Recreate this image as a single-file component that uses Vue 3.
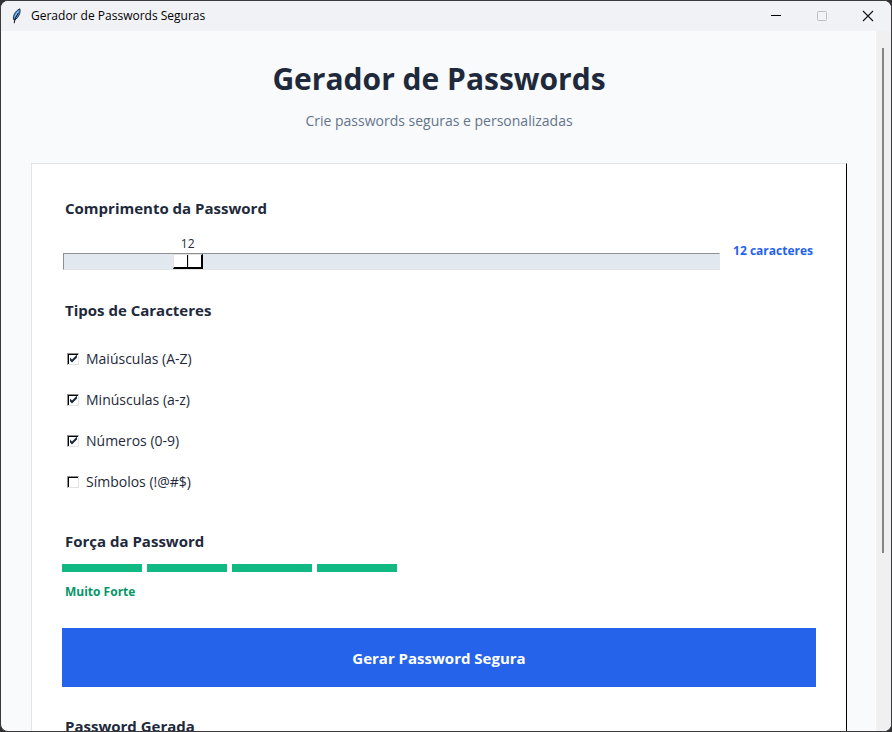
<script setup>
import { computed, ref } from 'vue'

const MIN = 4
const MAX = 50
const length = ref(12)
const ratio = computed(() => (length.value - MIN) / (MAX - MIN))

const types = ref([
  { id: 'upper', label: 'Maiúsculas (A-Z)', on: true },
  { id: 'lower', label: 'Minúsculas (a-z)', on: true },
  { id: 'digits', label: 'Números (0-9)', on: true },
  { id: 'symbols', label: 'Símbolos (!@#$)', on: false },
])
</script>

<template>
  <div class="window">
    <header class="titlebar">
      <svg class="feather" width="12" height="16" viewBox="0 0 12 16" aria-hidden="true">
        <path d="M2.500 11.500C1.800 8 4 3 8.800 .8C10 4.500 7.600 9.500 4 12Z" fill="#4d94e6" stroke="#1a2430" stroke-width=".9" />
        <path d="M7 3.500L4.200 8.500" stroke="#9cc8f7" stroke-width="1" />
        <path d="M7.400 5C5.500 8 3.600 10.500 3.200 15.200" fill="none" stroke="#0b0f14" stroke-width="1" />
      </svg>
      <span class="caption">Gerador de Passwords Seguras</span>
      <div class="controls">
        <button type="button" aria-label="Minimizar">
          <svg width="10" height="10" viewBox="0 0 10 10"><path d="M0 4.500H10" stroke="#000" /></svg>
        </button>
        <button type="button" aria-label="Maximizar" disabled>
          <svg width="10" height="10" viewBox="0 0 10 10"><rect x=".5" y=".5" width="9" height="9" rx="1" fill="none" stroke="#bfbfc3" /></svg>
        </button>
        <button type="button" aria-label="Fechar">
          <svg width="10" height="10" viewBox="0 0 10 10"><path d="M0 0L10 10M10 0L0 10" stroke="#111" stroke-width="1.100" /></svg>
        </button>
      </div>
    </header>

    <div class="body">
      <main class="content">
        <h1>Gerador de Passwords</h1>
        <p class="subtitle">Crie passwords seguras e personalizadas</p>

        <section class="card">
          <h2><label for="length">Comprimento da Password</label></h2>
          <div class="length-row">
            <div class="scale">
              <div class="value-rail">
                <span class="value" :style="{ left: ratio * 100 + '%' }">{{ length }}</span>
              </div>
              <input id="length" v-model.number="length" type="range" :min="MIN" :max="MAX" />
            </div>
            <output class="count" for="length">{{ length }} caracteres</output>
          </div>

          <h2>Tipos de Caracteres</h2>
          <div class="types">
            <label v-for="t in types" :key="t.id" class="type">
              <span class="check">
                <input v-model="t.on" type="checkbox" />
                <svg v-if="t.on" width="12" height="12" viewBox="0 0 12 12" aria-hidden="true">
                  <path d="M3 4.500V7.500L5 9.500L10 4.500V1.500L5 6.500Z" fill="#1e293b" />
                </svg>
              </span>
              <span>{{ t.label }}</span>
            </label>
          </div>

          <h2>Força da Password</h2>
          <div class="bars">
            <span v-for="n in 4" :key="n" class="bar"></span>
          </div>
          <p class="strength">Muito Forte</p>

          <button type="button" class="generate">Gerar Password Segura</button>

          <h2>Password Gerada</h2>
        </section>
      </main>
      <div class="scrollbar"><div class="thumb"></div></div>
    </div>
  </div>
</template>

<style>
body {
  margin: 0;
  background: #303032;
}
</style>

<style scoped>
* {
  box-sizing: border-box;
}
.window {
  height: 100vh;
  display: flex;
  flex-direction: column;
  overflow: hidden;
  border: 1px solid #3a3a3c;
  border-radius: 8px;
  background: #f8fafc;
  color: #1e293b;
  font-family: "Open Sans", "Noto Sans", sans-serif;
}
.titlebar {
  flex: none;
  height: 30px;
  display: flex;
  align-items: center;
  padding-left: 10px;
  background: #f1f2f6;
}
.feather {
  margin-right: 8px;
}
.caption {
  font-size: 12px;
  line-height: 16px;
  color: #000;
}
.controls {
  display: flex;
  margin-left: auto;
}
.controls button {
  width: 46px;
  height: 30px;
  display: flex;
  align-items: center;
  justify-content: center;
  padding: 0;
  border: 0;
  background: none;
}
.controls svg {
  overflow: visible;
}
.body {
  flex: 1;
  min-height: 0;
  display: flex;
}
.content {
  flex: 1;
  min-width: 0;
  overflow: hidden;
  padding: 26px 28px 0 30px;
}
h1 {
  margin: 0;
  font-size: 30px;
  line-height: 44px;
  font-weight: 700;
  text-align: center;
}
.subtitle {
  margin: 10px 0 32px;
  font-size: 14px;
  line-height: 20px;
  color: #64748b;
  text-align: center;
}
.card {
  padding: 30px;
  background: #fff;
  border: 1px solid #e3e3e3;
  border-right-color: #000;
}
h2 {
  margin: 0;
  padding: 0 3px;
  font-size: 15px;
  line-height: 28px;
  font-weight: 700;
}
.length-row {
  display: flex;
  align-items: flex-start;
  margin: 13px 0 26px;
  padding-left: 1px;
}
.scale {
  flex: 1;
}
.value-rail {
  position: relative;
  height: 18px;
  margin: 0 16px;
}
.value {
  position: absolute;
  transform: translateX(-50%);
  font-size: 12px;
  line-height: 18px;
}
.scale input {
  appearance: none;
  display: block;
  width: 100%;
  height: 17px;
  margin: 0;
  border: 1px solid #e3e3e3;
  border-top-color: #8f8f8f;
  border-left-color: #8f8f8f;
  border-right-color: #e2e8f0;
  background: #e2e8f0;
}
.scale input::-webkit-slider-thumb {
  appearance: none;
  width: 30px;
  height: 15px;
  border: 1px solid #e3e3e3;
  border-right: 2px solid #000;
  border-bottom: 2px solid #000;
  background: linear-gradient(90deg, #fff 13px, #000 13px, #000 14px, #e3e3e3 14px, #e3e3e3 15px, #fff 15px);
}
.count {
  width: 96px;
  padding-right: 3px;
  font-size: 12px;
  line-height: 32px;
  font-weight: 700;
  text-align: right;
  white-space: nowrap;
  color: #2563eb;
}
.types {
  margin: 14px 0 25px;
}
.type {
  display: flex;
  align-items: center;
  gap: 7px;
  height: 41px;
  padding-left: 5px;
  font-size: 14px;
  line-height: 20px;
}
.check {
  position: relative;
  width: 12px;
  height: 12px;
}
.check input {
  appearance: none;
  display: block;
  width: 12px;
  height: 12px;
  margin: 0;
  border: 1px solid #e3e3e3;
  border-top-color: #8f8f8f;
  border-left-color: #8f8f8f;
  background: #fff;
  box-shadow: inset 1px 1px 0 #000;
}
.check svg {
  position: absolute;
  inset: 0;
  pointer-events: none;
}
.bars {
  display: flex;
  gap: 5px;
  margin-top: 9px;
}
.bar {
  width: 80px;
  height: 8px;
  background: #10b981;
}
.strength {
  margin: 10px 0 26px;
  padding: 0 3px;
  font-size: 12px;
  line-height: 20px;
  font-weight: 700;
  color: #059669;
}
.generate {
  display: block;
  width: 100%;
  height: 59px;
  margin-bottom: 25px;
  padding: 0;
  border: 0;
  background: #2563eb;
  color: #fff;
  font: 700 15px/20px "Open Sans", "Noto Sans", sans-serif;
}
.scrollbar {
  flex: none;
  display: flex;
  flex-direction: column;
  align-items: flex-end;
  width: 16px;
  padding: 17px 7px 0 0;
  border-left: 1px solid #fff;
  background: #f0f0f0;
}
.thumb {
  width: 2px;
  height: 74%;
  background: #858585;
}
</style>
